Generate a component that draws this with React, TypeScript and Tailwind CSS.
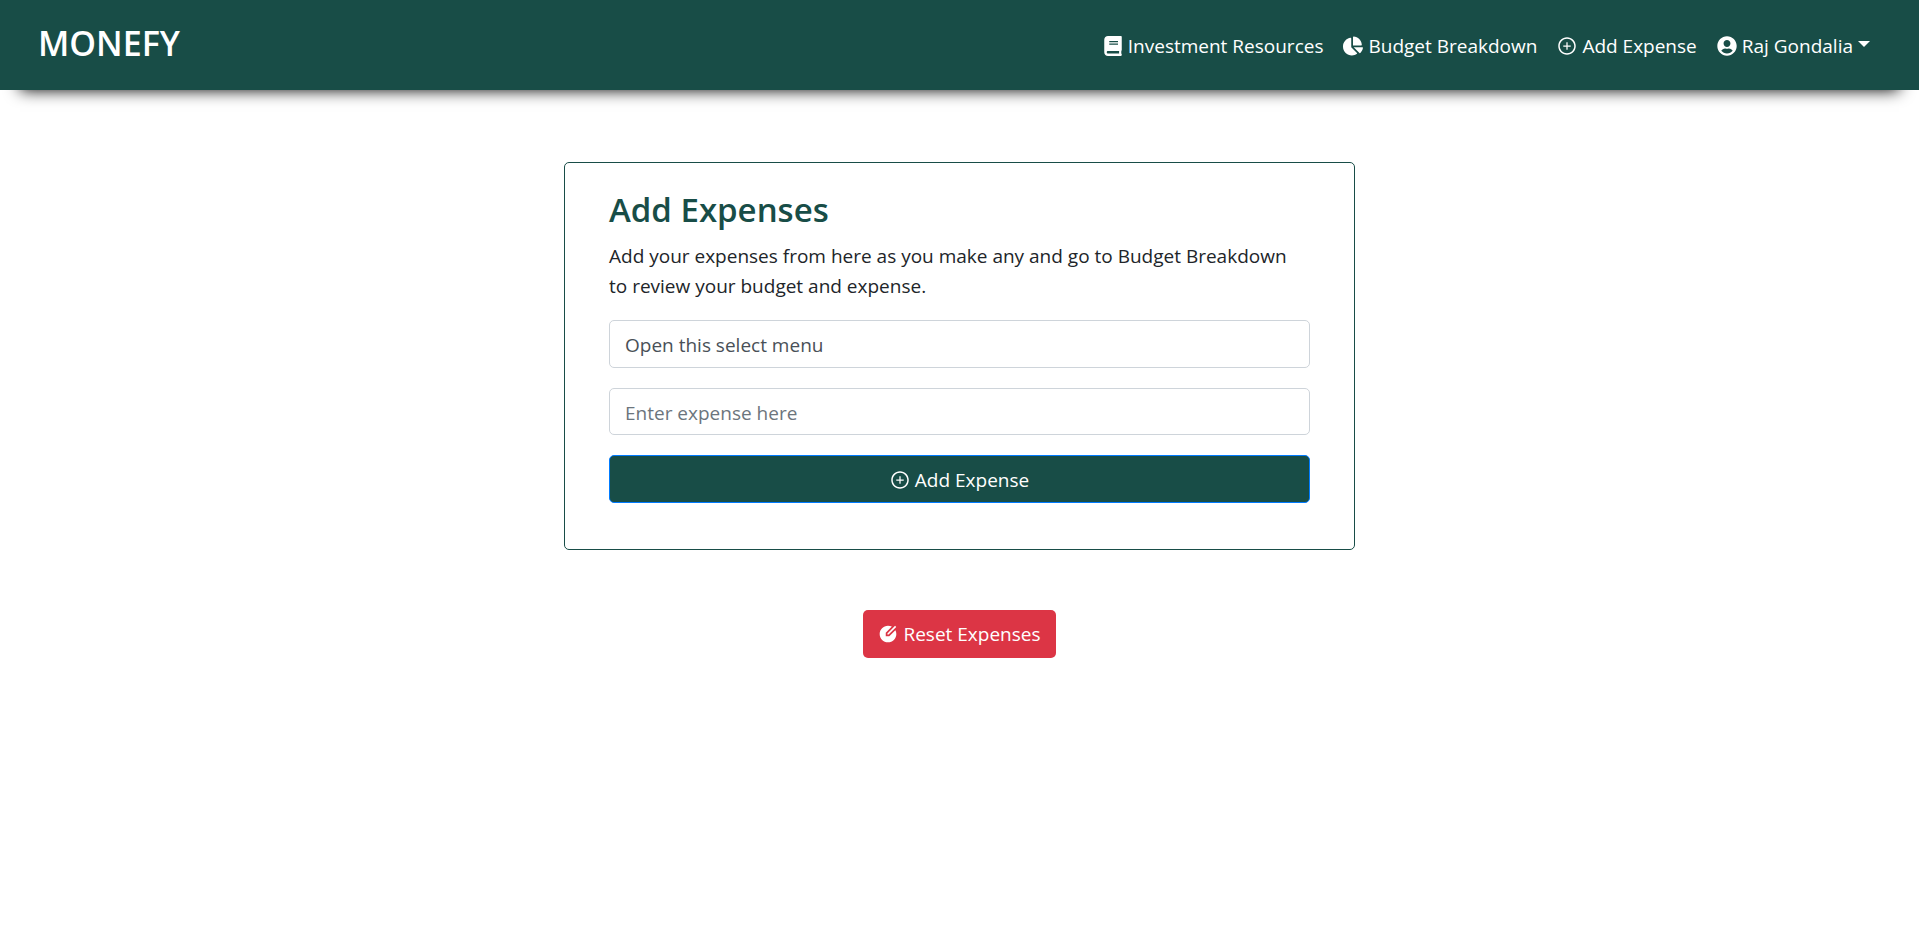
import React from "react";
import { FaBook, FaChartPie, FaUserCircle } from "react-icons/fa";
import { AiOutlinePlusCircle } from "react-icons/ai";
import { RiEditCircleFill } from "react-icons/ri";

const linkClass = "flex items-center gap-[5px] px-[10px] py-[10px] hover:text-white/75";
const fieldClass =
  "block w-full appearance-none rounded-[5px] border border-[#ced4da] bg-white px-[15px] pt-0.5 leading-[30px]";

function Navbar() {
  return (
    <header className="relative flex flex-wrap items-start justify-between bg-[#184d47] pr-[39px] pl-[38px] pt-[18px] pb-[19px] text-white shadow-[0_20px_15px_-20px_#000]">
      <a href="#home" className="text-[34px] leading-[50px] font-semibold">
        MONEFY
      </a>
      <nav className="flex flex-wrap items-center pt-[3px]">
        <a href="#resources" className={linkClass}>
          <FaBook size={20} /> Investment Resources
        </a>
        <a href="#breakdown" className={linkClass}>
          <FaChartPie size={20} /> Budget Breakdown
        </a>
        <a href="#add" className={linkClass}>
          <AiOutlinePlusCircle size={20} /> Add Expense
        </a>
        <button type="button" className={linkClass}>
          <FaUserCircle size={20} /> Raj Gondalia
          <span className="mb-1 border-x-[6px] border-t-[6px] border-x-transparent border-t-white" />
        </button>
      </nav>
    </header>
  );
}

export default function App() {
  return (
    <div className="min-h-screen bg-white font-['Open_Sans',sans-serif] text-[19px] leading-[30px] text-[#212529]">
      <Navbar />
      <main className="flex flex-col items-center px-4 pt-[72px]">
        <form
          className="w-full max-w-[791px] rounded-[5px] border border-[#184d47] px-11 pt-7 pb-[46px]"
          onSubmit={(e) => e.preventDefault()}
        >
          <h1 className="mb-3 text-[33px] leading-[38px] font-semibold text-[#184d47]">Add Expenses</h1>
          <p className="mb-[19px] pr-4">
            Add your expenses from here as you make any and go to Budget Breakdown to review your budget and expense.
          </p>
          <select
            aria-label="Expense category"
            className={`${fieldClass} mb-5 h-12 text-[#495057]`}
          >
            <option>Open this select menu</option>
          </select>
          <input
            type="text"
            aria-label="Expense amount"
            placeholder="Enter expense here"
            className={`${fieldClass} mb-5 h-[47px] placeholder:text-[#6c757d]`}
          />
          <button
            type="submit"
            className="flex h-12 w-full items-center justify-center gap-[5px] rounded-[5px] border border-[#007bff] bg-[#184d47] pt-0.5 text-white"
          >
            <AiOutlinePlusCircle size={20} /> Add Expense
          </button>
        </form>
        <button
          type="button"
          className="mt-[60px] flex h-12 items-center gap-[5px] rounded-[5px] bg-[#dc3545] px-[15px] text-white"
        >
          <RiEditCircleFill size={20} /> Reset Expenses
        </button>
      </main>
    </div>
  );
}
